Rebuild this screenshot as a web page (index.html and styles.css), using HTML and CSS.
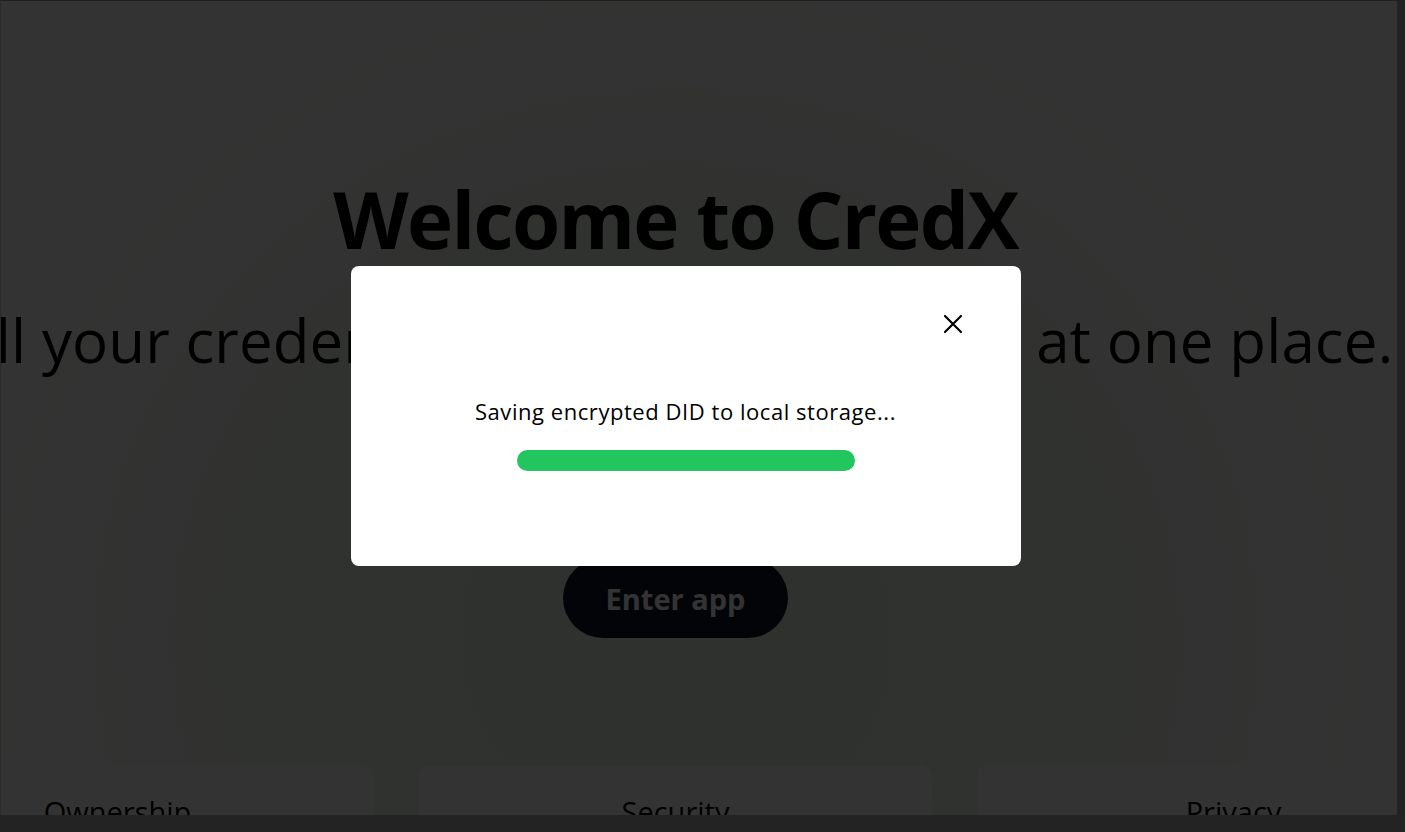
FILE: index.html
```html
<!DOCTYPE html>
<html lang="en">
<head>
<meta charset="utf-8">
<title>CredX</title>
<link rel="stylesheet" href="styles.css">
</head>
<body>
<div class="frame">
  <main class="page">
    <section class="hero">
      <h1 class="title">Welcome to CredX</h1>
      <p class="subtitle">All your credentials managed securely at one place.</p>
      <button class="enter" type="button">Enter app</button>
    </section>
    <section class="features">
      <article class="card"><h3 class="card-title">Ownership</h3></article>
      <article class="card"><h3 class="card-title">Security</h3></article>
      <article class="card"><h3 class="card-title">Privacy</h3></article>
    </section>
    <div class="backdrop">
      <div class="modal" role="dialog">
        <div class="modal-head">
          <button class="close" type="button" aria-label="Close">
            <svg width="24" height="24" viewBox="0 0 24 24" fill="none" stroke="#000" stroke-width="2.2" stroke-linecap="round"><path d="M4 4 L20 20 M20 4 L4 20"/></svg>
          </button>
        </div>
        <div class="modal-body">
          <p class="status">Saving encrypted DID to local storage...</p>
          <div class="bar"></div>
        </div>
      </div>
    </div>
  </main>
  <div class="vscroll"></div>
  <div class="hscroll"></div>
</div>
</body>
</html>
```
FILE: styles.css
```css
html, body {
  margin: 0;
  height: 100%;
  overflow: hidden;
  background: #222;
}

.frame {
  display: grid;
  grid-template-columns: 1fr 8px;
  grid-template-rows: 1fr 17px;
  height: 100vh;
}

.page {
  grid-column: 1;
  grid-row: 1;
  position: relative;
  overflow: hidden;
  border-top: 1px solid #1f1f1f;
  border-left: 1px solid #2a2a2a;
  padding-right: 47px;
  display: flex;
  flex-direction: column;
  align-items: center;
  font-family: "Open Sans", "Noto Sans", sans-serif;
  color: #000;
  background:
    radial-gradient(ellipse 760px 720px at 675px 640px,
      #e5f6e0 0%, #e7f6e3 25%, #ecf7e9 45%, #f3faf1 65%, #fafdf9 82%, #ffffff 100%);
}

.hero {
  display: flex;
  flex-direction: column;
  align-items: center;
}

.title {
  margin: 171px 0 0;
  font-size: 78px;
  line-height: 94px;
  font-weight: 700;
  letter-spacing: -1.7px;
  white-space: nowrap;
}

.subtitle {
  margin: 36px 0 0;
  font-size: 60px;
  line-height: 76px;
  font-weight: 400;
  letter-spacing: 0.1px;
  white-space: nowrap;
}

.enter {
  margin-top: 180px;
  height: 80px;
  padding: 0 43px;
  border: 0;
  border-radius: 40px;
  background: #111827;
  color: #fff;
  font-family: inherit;
  font-size: 29px;
  font-weight: 700;
}

.features {
  margin-top: 127px;
  display: flex;
  gap: 45px;
}

.card {
  flex: 0 0 513px;
  height: 200px;
  box-sizing: border-box;
  padding-top: 28px;
  border-radius: 12px;
  background: #ffffff;
  text-align: center;
}

.card-title {
  margin: 0;
  font-size: 29px;
  line-height: 38px;
  font-weight: 400;
}

.backdrop {
  position: absolute;
  inset: 0;
  background: rgba(0, 0, 0, 0.8);
  display: flex;
  align-items: center;
  justify-content: center;
  padding: 15px 27px 0 0;
}

.modal {
  width: 670px;
  box-sizing: border-box;
  padding: 46px 56px 95px;
  background: #fff;
  border-radius: 8px;
  display: flex;
  flex-direction: column;
}

.modal-head {
  display: flex;
  justify-content: flex-end;
}

.close {
  width: 24px;
  height: 24px;
  padding: 0;
  border: 0;
  background: none;
  display: flex;
}

.modal-body {
  margin-top: 61px;
  display: flex;
  flex-direction: column;
  align-items: center;
  gap: 25px;
}

.status {
  margin: 0;
  font-size: 22px;
  line-height: 28px;
  letter-spacing: 0.55px;
  color: #000;
}

.bar {
  width: 338px;
  height: 21px;
  border-radius: 11px;
  background: #22c55e;
}

.vscroll {
  grid-column: 2;
  grid-row: 1;
  background: #222;
}

.hscroll {
  grid-column: 1 / 3;
  grid-row: 2;
  background: #232323;
}
```
